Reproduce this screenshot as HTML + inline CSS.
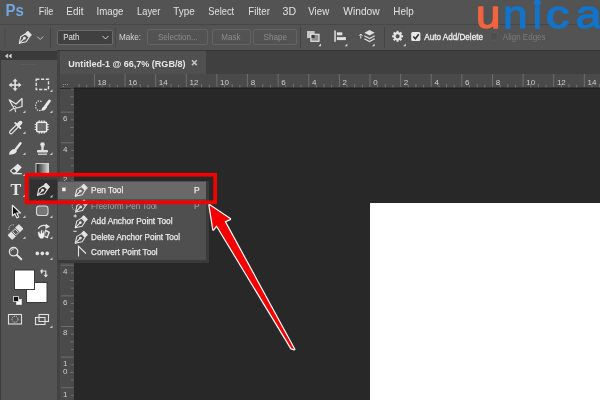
<!DOCTYPE html>
<html><head><meta charset="utf-8"><title>Pen Tool</title>
<style>
html,body{margin:0;padding:0;}
body{width:600px;height:400px;overflow:hidden;background:#282828;position:relative;font-family:"Liberation Sans",sans-serif;color:#dcdcdc;}
.abs{position:absolute;}
svg{will-change:transform;}
#menubar{left:0;top:0;width:600px;height:24px;background:#535353;}
#optbar{left:0;top:23.500px;width:600px;height:26px;background:#535353;border-top:1px solid #474747;box-sizing:border-box;}
#optline{left:0;top:49.500px;width:600px;height:1.500px;background:#363636;}
.btn{position:absolute;top:29px;height:16px;box-sizing:border-box;border:1px solid #636363;border-radius:2px;background:#535353;color:#8e8e8e;font-size:9px;text-align:center;line-height:13px;}
#toolbar{left:0;top:50px;width:57px;height:350px;background:#535353;}
#tbhead{left:0;top:51px;width:57px;height:9px;background:#3a3a3a;}
#tbsep{left:57px;top:51px;width:3px;height:349px;background:#424242;}
#tabbar{left:60px;top:51px;width:540px;height:23px;background:#404040;}
#tab{left:60px;top:51px;width:146px;height:23px;background:#505050;}
#doc{left:369.700px;top:203.200px;width:231px;height:197px;background:#fff;}
#fly{left:57.500px;top:180.500px;width:148.300px;height:79px;background:#4f4f4f;box-shadow:1.500px 1.500px 0 1.500px #3a3a3a;}
#flysel{left:57.500px;top:182px;width:148.300px;height:16.800px;background:#696969;}
svg text.rl{font-family:"Liberation Sans",sans-serif;font-size:8px;fill:#cdcdcd;}
</style></head><body>

<div id="menubar" class="abs"></div>

<div id="optbar" class="abs"></div><div id="optline" class="abs"></div>
<!-- options bar content -->
<div class="abs" style="left:56.500px;top:29.500px;width:56px;height:15px;box-sizing:border-box;border:1px solid #6a6a6a;border-radius:2px;background:#404040;"></div>
<div class="btn" style="left:147px;width:61px;"></div>
<div class="btn" style="left:212px;width:39px;"></div>
<div class="btn" style="left:253px;width:44px;"></div>

<div id="toolbar" class="abs"></div>
<div id="tbhead" class="abs"></div>
<div id="tbsep" class="abs"></div>
<div id="tabbar" class="abs"></div>
<div id="tab" class="abs"></div>
<div id="doc" class="abs"></div>

<!-- rulers -->
<svg class="abs" style="left:0;top:0" width="600" height="400" viewBox="0 0 600 400">
<rect x="0" y="50" width="1" height="350" fill="#3c3c3c"/>
<rect x="60" y="74" width="540" height="14" fill="#4a4a4a"/>
<rect x="60" y="88" width="14" height="312" fill="#4a4a4a"/>
<rect x="60" y="87.500" width="540" height="1.200" fill="#1e1e1e"/>
<rect x="78.61" y="84.1" width="1" height="3.2" fill="#747474"/>
<rect x="86.27" y="84.89999999999999" width="1" height="2.4" fill="#747474"/>
<rect x="93.92" y="74" width="1" height="13" fill="#6e6e6e"/>
<text x="97.62" y="85.2" class="rl">18</text>
<rect x="101.58" y="84.89999999999999" width="1" height="2.4" fill="#747474"/>
<rect x="109.23" y="84.1" width="1" height="3.2" fill="#747474"/>
<rect x="116.89" y="84.89999999999999" width="1" height="2.4" fill="#747474"/>
<rect x="124.54" y="74" width="1" height="13" fill="#6e6e6e"/>
<text x="128.24" y="85.2" class="rl">16</text>
<rect x="132.19" y="84.89999999999999" width="1" height="2.4" fill="#747474"/>
<rect x="139.85" y="84.1" width="1" height="3.2" fill="#747474"/>
<rect x="147.50" y="84.89999999999999" width="1" height="2.4" fill="#747474"/>
<rect x="155.16" y="74" width="1" height="13" fill="#6e6e6e"/>
<text x="158.86" y="85.2" class="rl">14</text>
<rect x="162.81" y="84.89999999999999" width="1" height="2.4" fill="#747474"/>
<rect x="170.47" y="84.1" width="1" height="3.2" fill="#747474"/>
<rect x="178.12" y="84.89999999999999" width="1" height="2.4" fill="#747474"/>
<rect x="185.78" y="74" width="1" height="13" fill="#6e6e6e"/>
<text x="189.48" y="85.2" class="rl">12</text>
<rect x="193.44" y="84.89999999999999" width="1" height="2.4" fill="#747474"/>
<rect x="201.09" y="84.1" width="1" height="3.2" fill="#747474"/>
<rect x="208.75" y="84.89999999999999" width="1" height="2.4" fill="#747474"/>
<rect x="216.40" y="74" width="1" height="13" fill="#6e6e6e"/>
<text x="220.10" y="85.2" class="rl">10</text>
<rect x="224.06" y="84.89999999999999" width="1" height="2.4" fill="#747474"/>
<rect x="231.71" y="84.1" width="1" height="3.2" fill="#747474"/>
<rect x="239.37" y="84.89999999999999" width="1" height="2.4" fill="#747474"/>
<rect x="247.02" y="74" width="1" height="13" fill="#6e6e6e"/>
<text x="250.72" y="85.2" class="rl">8</text>
<rect x="254.67" y="84.89999999999999" width="1" height="2.4" fill="#747474"/>
<rect x="262.33" y="84.1" width="1" height="3.2" fill="#747474"/>
<rect x="269.98" y="84.89999999999999" width="1" height="2.4" fill="#747474"/>
<rect x="277.64" y="74" width="1" height="13" fill="#6e6e6e"/>
<text x="281.34" y="85.2" class="rl">6</text>
<rect x="285.29" y="84.89999999999999" width="1" height="2.4" fill="#747474"/>
<rect x="292.95" y="84.1" width="1" height="3.2" fill="#747474"/>
<rect x="300.60" y="84.89999999999999" width="1" height="2.4" fill="#747474"/>
<rect x="308.26" y="74" width="1" height="13" fill="#6e6e6e"/>
<text x="311.96" y="85.2" class="rl">4</text>
<rect x="315.91" y="84.89999999999999" width="1" height="2.4" fill="#747474"/>
<rect x="323.57" y="84.1" width="1" height="3.2" fill="#747474"/>
<rect x="331.22" y="84.89999999999999" width="1" height="2.4" fill="#747474"/>
<rect x="338.88" y="74" width="1" height="13" fill="#6e6e6e"/>
<text x="342.58" y="85.2" class="rl">2</text>
<rect x="346.53" y="84.89999999999999" width="1" height="2.4" fill="#747474"/>
<rect x="354.19" y="84.1" width="1" height="3.2" fill="#747474"/>
<rect x="361.84" y="84.89999999999999" width="1" height="2.4" fill="#747474"/>
<rect x="369.50" y="74" width="1" height="13" fill="#6e6e6e"/>
<text x="373.20" y="85.2" class="rl">0</text>
<rect x="377.15" y="84.89999999999999" width="1" height="2.4" fill="#747474"/>
<rect x="384.81" y="84.1" width="1" height="3.2" fill="#747474"/>
<rect x="392.46" y="84.89999999999999" width="1" height="2.4" fill="#747474"/>
<rect x="400.12" y="74" width="1" height="13" fill="#6e6e6e"/>
<text x="403.82" y="85.2" class="rl">2</text>
<rect x="407.77" y="84.89999999999999" width="1" height="2.4" fill="#747474"/>
<rect x="415.43" y="84.1" width="1" height="3.2" fill="#747474"/>
<rect x="423.08" y="84.89999999999999" width="1" height="2.4" fill="#747474"/>
<rect x="430.74" y="74" width="1" height="13" fill="#6e6e6e"/>
<text x="434.44" y="85.2" class="rl">4</text>
<rect x="438.39" y="84.89999999999999" width="1" height="2.4" fill="#747474"/>
<rect x="446.05" y="84.1" width="1" height="3.2" fill="#747474"/>
<rect x="453.70" y="84.89999999999999" width="1" height="2.4" fill="#747474"/>
<rect x="461.36" y="74" width="1" height="13" fill="#6e6e6e"/>
<text x="465.06" y="85.2" class="rl">6</text>
<rect x="469.01" y="84.89999999999999" width="1" height="2.4" fill="#747474"/>
<rect x="476.67" y="84.1" width="1" height="3.2" fill="#747474"/>
<rect x="484.32" y="84.89999999999999" width="1" height="2.4" fill="#747474"/>
<rect x="491.98" y="74" width="1" height="13" fill="#6e6e6e"/>
<text x="495.68" y="85.2" class="rl">8</text>
<rect x="499.63" y="84.89999999999999" width="1" height="2.4" fill="#747474"/>
<rect x="507.29" y="84.1" width="1" height="3.2" fill="#747474"/>
<rect x="514.95" y="84.89999999999999" width="1" height="2.4" fill="#747474"/>
<rect x="522.60" y="74" width="1" height="13" fill="#6e6e6e"/>
<text x="526.30" y="85.2" class="rl">10</text>
<rect x="530.25" y="84.89999999999999" width="1" height="2.4" fill="#747474"/>
<rect x="537.91" y="84.1" width="1" height="3.2" fill="#747474"/>
<rect x="545.57" y="84.89999999999999" width="1" height="2.4" fill="#747474"/>
<rect x="553.22" y="74" width="1" height="13" fill="#6e6e6e"/>
<text x="556.92" y="85.2" class="rl">12</text>
<rect x="560.88" y="84.89999999999999" width="1" height="2.4" fill="#747474"/>
<rect x="568.53" y="84.1" width="1" height="3.2" fill="#747474"/>
<rect x="576.19" y="84.89999999999999" width="1" height="2.4" fill="#747474"/>
<rect x="583.84" y="74" width="1" height="13" fill="#6e6e6e"/>
<text x="587.54" y="85.2" class="rl">14</text>
<rect x="591.50" y="84.89999999999999" width="1" height="2.4" fill="#747474"/>
<rect x="599.15" y="84.1" width="1" height="3.2" fill="#747474"/>
<rect x="71.1" y="88.67" width="2.4" height="1" fill="#747474"/>
<rect x="70.3" y="96.33" width="3.2" height="1" fill="#747474"/>
<rect x="71.1" y="103.98" width="2.4" height="1" fill="#747474"/>
<rect x="61" y="111.64" width="12.5" height="1" fill="#6e6e6e"/>
<text x="63" y="120.94" class="rl">6</text>
<rect x="71.1" y="119.30" width="2.4" height="1" fill="#747474"/>
<rect x="70.3" y="126.95" width="3.2" height="1" fill="#747474"/>
<rect x="71.1" y="134.60" width="2.4" height="1" fill="#747474"/>
<rect x="61" y="142.26" width="12.5" height="1" fill="#6e6e6e"/>
<text x="63" y="151.56" class="rl">4</text>
<rect x="71.1" y="149.91" width="2.4" height="1" fill="#747474"/>
<rect x="70.3" y="157.57" width="3.2" height="1" fill="#747474"/>
<rect x="71.1" y="165.22" width="2.4" height="1" fill="#747474"/>
<rect x="61" y="172.88" width="12.5" height="1" fill="#6e6e6e"/>
<text x="63" y="182.18" class="rl">2</text>
<rect x="71.1" y="180.53" width="2.4" height="1" fill="#747474"/>
<rect x="70.3" y="188.19" width="3.2" height="1" fill="#747474"/>
<rect x="71.1" y="195.84" width="2.4" height="1" fill="#747474"/>
<rect x="61" y="203.50" width="12.5" height="1" fill="#6e6e6e"/>
<text x="63" y="212.80" class="rl">0</text>
<rect x="71.1" y="211.16" width="2.4" height="1" fill="#747474"/>
<rect x="70.3" y="218.81" width="3.2" height="1" fill="#747474"/>
<rect x="71.1" y="226.47" width="2.4" height="1" fill="#747474"/>
<rect x="61" y="234.12" width="12.5" height="1" fill="#6e6e6e"/>
<text x="63" y="243.42" class="rl">2</text>
<rect x="71.1" y="241.78" width="2.4" height="1" fill="#747474"/>
<rect x="70.3" y="249.43" width="3.2" height="1" fill="#747474"/>
<rect x="71.1" y="257.08" width="2.4" height="1" fill="#747474"/>
<rect x="61" y="264.74" width="12.5" height="1" fill="#6e6e6e"/>
<text x="63" y="274.04" class="rl">4</text>
<rect x="71.1" y="272.39" width="2.4" height="1" fill="#747474"/>
<rect x="70.3" y="280.05" width="3.2" height="1" fill="#747474"/>
<rect x="71.1" y="287.70" width="2.4" height="1" fill="#747474"/>
<rect x="61" y="295.36" width="12.5" height="1" fill="#6e6e6e"/>
<text x="63" y="304.66" class="rl">6</text>
<rect x="71.1" y="303.01" width="2.4" height="1" fill="#747474"/>
<rect x="70.3" y="310.67" width="3.2" height="1" fill="#747474"/>
<rect x="71.1" y="318.32" width="2.4" height="1" fill="#747474"/>
<rect x="61" y="325.98" width="12.5" height="1" fill="#6e6e6e"/>
<text x="63" y="335.28" class="rl">8</text>
<rect x="71.1" y="333.63" width="2.4" height="1" fill="#747474"/>
<rect x="70.3" y="341.29" width="3.2" height="1" fill="#747474"/>
<rect x="71.1" y="348.94" width="2.4" height="1" fill="#747474"/>
<rect x="61" y="356.60" width="12.5" height="1" fill="#6e6e6e"/>
<text x="63" y="365.90" class="rl">1</text>
<text x="63" y="374.20" class="rl">0</text>
<rect x="71.1" y="364.25" width="2.4" height="1" fill="#747474"/>
<rect x="70.3" y="371.91" width="3.2" height="1" fill="#747474"/>
<rect x="71.1" y="379.56" width="2.4" height="1" fill="#747474"/>
<rect x="61" y="387.22" width="12.5" height="1" fill="#6e6e6e"/>
<text x="63" y="396.52" class="rl">1</text>
<text x="63" y="404.82" class="rl">2</text>
<rect x="71.1" y="394.88" width="2.4" height="1" fill="#747474"/>
<rect x="61" y="417.84" width="12.5" height="1" fill="#6e6e6e"/>
<text x="63" y="427.14" class="rl">1</text>
<text x="63" y="435.44" class="rl">4</text>
<rect x="60" y="74" width="14" height="14" fill="#4a4a4a"/>
<g fill="#8a8a8a"><rect x="63" y="84" width="1" height="1"/><rect x="65" y="84" width="1" height="1"/><rect x="67" y="84" width="1" height="1"/><rect x="63" y="86" width="1" height="1"/></g>
</svg>

<div id="fly" class="abs"></div>
<div id="flysel" class="abs"></div>

<!-- icons overlay -->
<svg class="abs" style="left:0;top:0" width="600" height="400" viewBox="0 0 600 400">
<g font-family="'Liberation Sans',sans-serif">
<text x="38.85" y="15.00" textLength="14.55" lengthAdjust="spacingAndGlyphs" font-size="10.6" fill="#e2e2e2" font-weight="normal" >File</text>
<text x="66.35" y="15.00" textLength="17.05" lengthAdjust="spacingAndGlyphs" font-size="10.6" fill="#e2e2e2" font-weight="normal" >Edit</text>
<text x="96.60" y="15.00" textLength="26.80" lengthAdjust="spacingAndGlyphs" font-size="10.6" fill="#e2e2e2" font-weight="normal" >Image</text>
<text x="137.10" y="15.00" textLength="23.30" lengthAdjust="spacingAndGlyphs" font-size="10.6" fill="#e2e2e2" font-weight="normal" >Layer</text>
<text x="173.35" y="15.00" textLength="21.30" lengthAdjust="spacingAndGlyphs" font-size="10.6" fill="#e2e2e2" font-weight="normal" >Type</text>
<text x="208.35" y="15.00" textLength="25.80" lengthAdjust="spacingAndGlyphs" font-size="10.6" fill="#e2e2e2" font-weight="normal" >Select</text>
<text x="248.35" y="15.00" textLength="21.55" lengthAdjust="spacingAndGlyphs" font-size="10.6" fill="#e2e2e2" font-weight="normal" >Filter</text>
<text x="282.60" y="15.00" textLength="13.55" lengthAdjust="spacingAndGlyphs" font-size="10.6" fill="#e2e2e2" font-weight="normal" >3D</text>
<text x="308.35" y="15.00" textLength="20.80" lengthAdjust="spacingAndGlyphs" font-size="10.6" fill="#e2e2e2" font-weight="normal" >View</text>
<text x="343.35" y="15.00" textLength="36.30" lengthAdjust="spacingAndGlyphs" font-size="10.6" fill="#e2e2e2" font-weight="normal" >Window</text>
<text x="393.35" y="15.00" textLength="20.30" lengthAdjust="spacingAndGlyphs" font-size="10.6" fill="#e2e2e2" font-weight="normal" >Help</text>
<text x="5.60" y="15.80" textLength="18.30" lengthAdjust="spacingAndGlyphs" font-size="16.8" fill="#72a6de" font-weight="bold" >Ps</text>
<text x="63.20" y="40.20" textLength="16.20" lengthAdjust="spacingAndGlyphs" font-size="9" fill="#e6e6e6" font-weight="normal" >Path</text>
<text x="118.90" y="40.20" textLength="22.20" lengthAdjust="spacingAndGlyphs" font-size="9" fill="#d4d4d4" font-weight="normal" >Make:</text>
<text x="157.90" y="40.20" textLength="39.80" lengthAdjust="spacingAndGlyphs" font-size="9" fill="#8c8c8c" font-weight="normal" >Selection...</text>
<text x="221.30" y="40.20" textLength="19.10" lengthAdjust="spacingAndGlyphs" font-size="9" fill="#8c8c8c" font-weight="normal" >Mask</text>
<text x="263.60" y="40.20" textLength="23.50" lengthAdjust="spacingAndGlyphs" font-size="9" fill="#8c8c8c" font-weight="normal" >Shape</text>
<text x="424.35" y="40.20" textLength="58.60" lengthAdjust="spacingAndGlyphs" font-size="9" fill="#f0f0f0" font-weight="normal" stroke="#f0f0f0" stroke-width="0.3">Auto Add/Delete</text>
<text x="502.80" y="40.20" textLength="42.80" lengthAdjust="spacingAndGlyphs" font-size="9" fill="#7c7c7c" font-weight="normal" >Align Edges</text>
<text x="68.35" y="66.80" textLength="117.10" lengthAdjust="spacingAndGlyphs" font-size="9.8" fill="#e6e6e6" font-weight="bold" >Untitled-1 @ 66,7% (RGB/8)</text>
<text x="91.10" y="193.20" textLength="32.20" lengthAdjust="spacingAndGlyphs" font-size="9" fill="#ececec" font-weight="normal" stroke="#ececec" stroke-width="0.25">Pen Tool</text>
<text x="194.00" y="193.20" textLength="5.60" lengthAdjust="spacingAndGlyphs" font-size="9" fill="#ececec" font-weight="normal" stroke="#ececec" stroke-width="0.25">P</text>
<text x="91.10" y="208.70" textLength="65.80" lengthAdjust="spacingAndGlyphs" font-size="9" fill="#a8a8a8" font-weight="normal" >Freeform Pen Tool</text>
<text x="194.00" y="208.70" textLength="5.60" lengthAdjust="spacingAndGlyphs" font-size="9" fill="#a8a8a8" font-weight="normal" >P</text>
<text x="91.10" y="224.20" textLength="81.40" lengthAdjust="spacingAndGlyphs" font-size="9" fill="#ececec" font-weight="normal" stroke="#ececec" stroke-width="0.25">Add Anchor Point Tool</text>
<text x="91.10" y="239.75" textLength="89.00" lengthAdjust="spacingAndGlyphs" font-size="9" fill="#ececec" font-weight="normal" stroke="#ececec" stroke-width="0.25">Delete Anchor Point Tool</text>
<text x="91.10" y="255.20" textLength="66.50" lengthAdjust="spacingAndGlyphs" font-size="9" fill="#ececec" font-weight="normal" stroke="#ececec" stroke-width="0.25">Convert Point Tool</text>
</g>
<!-- toolbar collapse chevrons -->
<path d="M7.800 54 L5.300 56 L7.800 58 Z M11.300 54 L8.800 56 L11.300 58 Z" fill="#d8d8d8" stroke="#d8d8d8" stroke-width="0.500"/>
<!-- tab close -->
<path d="M192 60.300 L196.800 65.100 M196.800 60.300 L192 65.100" stroke="#c0c0c0" stroke-width="1.600" fill="none"/>

<!-- option bar icons -->
<g transform="translate(18.3,30.8) scale(0.95)"><g fill="none" stroke="#e4e4e4" stroke-width="1.15" stroke-linejoin="round" stroke-linecap="round">
<path d="M1 13.2 L2.6 6.2 L7.6 3.1 L11.4 6.9 L8.3 11.6 Z"/>
<path d="M1.2 13 L5.8 8.4"/>
<circle cx="6.4" cy="7.8" r="0.9" fill="#e4e4e4"/>
<path d="M8.2 2.4 L10 0.7 L13.6 4.3 L11.9 6.1 Z" fill="#e4e4e4"/>
</g></g>
<path d="M37.200 36.500 L40.200 39.500 L43.200 36.500" fill="none" stroke="#c0c0c0" stroke-width="1"/>
<rect x="50" y="27" width="1" height="21" fill="#444"/>
<rect x="115" y="27" width="1" height="21" fill="#484848"/>
<rect x="4.500" y="28" width="1" height="19" fill="#4a4a4a"/>
<path d="M102.500 36 L105.500 39 L108.500 36" fill="none" stroke="#d0d0d0" stroke-width="1"/>
<rect x="300" y="27" width="1" height="21" fill="#444"/>
<!-- path ops -->
<rect x="307" y="31" width="7.600" height="7" fill="#c4c4c4"/>
<rect x="310.900" y="34.300" width="8.100" height="7" fill="#8e8e8e" stroke="#ececec" stroke-width="1.100"/>
<rect x="311.500" y="34.900" width="3.100" height="3.100" fill="#3c3c3c"/>
<path d="M321 43.6 L321 46.2 L318.4 46.2 Z" fill="#d8d8d8"/>
<!-- align -->
<rect x="334.300" y="30.500" width="1.500" height="11.300" fill="#e0e0e0"/>
<rect x="336.900" y="32.300" width="5.400" height="3" fill="#e0e0e0"/>
<rect x="336.900" y="37.100" width="9" height="3" fill="#e0e0e0"/>
<path d="M347.3 43.6 L347.3 46.2 L344.7 46.2 Z" fill="#d8d8d8"/>
<!-- arrange -->
<path d="M364.300 32.800 L369.500 30 L374.700 32.800 L369.500 35.600 Z" fill="#e0e0e0"/>
<path d="M364.300 35.800 L369.500 38.600 L374.700 35.800 M364.300 38.800 L369.500 41.600 L374.700 38.800" fill="none" stroke="#e0e0e0" stroke-width="1.200"/>
<path d="M360.800 38.500 L360.800 34 M359.200 35.700 L360.800 34 L362.400 35.700" fill="none" stroke="#e0e0e0" stroke-width="1"/>
<path d="M374.6 43.6 L374.6 46.2 L372.0 46.2 Z" fill="#d8d8d8"/>
<rect x="384" y="27" width="1" height="21" fill="#444"/>
<!-- gear -->
<g transform="translate(397.600,36.300) scale(0.880)">
<circle r="3.600" fill="none" stroke="#e6e6e6" stroke-width="2.400"/>
<g stroke="#e6e6e6" stroke-width="2.300">
<path d="M0 -6.200 L0 -4"/><path d="M0 6.200 L0 4"/><path d="M-6.200 0 L-4 0"/><path d="M6.200 0 L4 0"/>
<path d="M-4.400 -4.400 L-2.900 -2.900"/><path d="M4.400 4.400 L2.900 2.900"/><path d="M-4.400 4.400 L-2.900 2.900"/><path d="M4.400 -4.400 L2.900 -2.900"/>
</g></g>
<path d="M405.8 43.6 L405.8 46.2 L403.2 46.2 Z" fill="#d8d8d8"/>
<!-- checkbox checked -->
<rect x="411.200" y="32" width="9.200" height="9" rx="1.500" fill="#e8e8e8"/>
<path d="M413.300 36.600 L415.400 38.800 L418.700 34.200" fill="none" stroke="#2c2c2c" stroke-width="1.500"/>
<!-- checkbox disabled -->
<rect x="490.300" y="32.700" width="7.500" height="7.500" rx="1" fill="#4f4f4f" stroke="#5c5c5c" stroke-width="0.800"/>

<!-- ===== toolbar icons ===== -->
<path d="M21 64.500 L37 64.500" stroke="#626262" stroke-width="1" stroke-dasharray="1 1"/>
<!-- move -->
<g fill="#e0e0e0"><rect x="14.300" y="80" width="1.600" height="10"/><rect x="10" y="84.200" width="10" height="1.600"/>
<path d="M15.100 78.500 L17.600 81.500 L12.600 81.500 Z"/><path d="M15.100 91.300 L17.600 88.300 L12.600 88.300 Z"/>
<path d="M8.700 85 L11.700 82.500 L11.700 87.500 Z"/><path d="M21.500 85 L18.500 82.500 L18.500 87.500 Z"/></g>
<!-- marquee -->
<rect x="36.200" y="79.200" width="12.300" height="10.300" fill="none" stroke="#e0e0e0" stroke-width="1.400" stroke-dasharray="3.200 1.600"/>
<path d="M52.5 89.3 L52.5 92 L49.8 92 Z" fill="#c8c8c8"/>
<!-- polygonal lasso -->
<path d="M9.200 99.800 L16 104 L22 98.600 L22 106.500 L16.800 108 L12.600 106 Z" fill="none" stroke="#e4e4e4" stroke-width="1.300" stroke-linejoin="round"/>
<circle cx="14.600" cy="107.400" r="1.200" fill="#535353" stroke="#e4e4e4" stroke-width="0.900"/>
<path d="M13.800 108.200 L9.800 110.900 M14.800 108.600 L15.600 111.600" fill="none" stroke="#e4e4e4" stroke-width="1.100" stroke-linecap="round"/>
<path d="M25.5 110.3 L25.5 113 L22.8 113 Z" fill="#c8c8c8"/>
<!-- quick select -->
<path d="M41.500 101.600 Q38.500 99.800 36.600 102.300 Q34.800 105.500 36.300 108.800 Q38.300 111.800 41 109.900" fill="none" stroke="#e4e4e4" stroke-width="1.100" stroke-dasharray="1.500 1.100"/>
<path d="M49.400 101 L45.800 105.800" stroke="#e8e8e8" stroke-width="2.900" stroke-linecap="round"/>
<path d="M44.800 105.400 L47.100 107.200 L45 110 L41.200 111 L42.200 107.800 Z" fill="#e8e8e8"/>
<path d="M52.5 110.3 L52.5 113 L49.8 113 Z" fill="#c8c8c8"/>
<!-- eyedropper -->
<path d="M16.600 124.600 L10.200 131 Q9 132.300 10 133.300 Q11 134.300 12.300 133.100 L18.700 126.700" fill="none" stroke="#e6e6e6" stroke-width="1.200" stroke-linejoin="round"/>
<path d="M15.200 122.900 L20.400 128.100" stroke="#e6e6e6" stroke-width="1.800" stroke-linecap="round"/>
<path d="M18.300 124.900 L20.500 122.700" stroke="#e6e6e6" stroke-width="3.800" stroke-linecap="round"/>
<path d="M25.5 131.3 L25.5 134 L22.8 134 Z" fill="#c8c8c8"/>
<!-- patch -->
<rect x="36.700" y="122.300" width="10" height="9.400" rx="1.200" fill="#6c6c6c" stroke="#ececec" stroke-width="1.500"/>
<g stroke="#ececec" stroke-width="1"><path d="M34.700 124.500 L36.700 124.500 M34.700 127 L36.700 127 M34.700 129.500 L36.700 129.500 M46.700 124.500 L48.700 124.500 M46.700 127 L48.700 127 M46.700 129.500 L48.700 129.500 M39.200 120.300 L39.200 122.300 M41.700 120.300 L41.700 122.300 M44.200 120.300 L44.200 122.300 M39.200 131.700 L39.200 133.700 M41.700 131.700 L41.700 133.700 M44.200 131.700 L44.200 133.700"/></g>
<!-- brush -->
<path d="M20.500 143.200 L16 149" stroke="#e8e8e8" stroke-width="2.400" stroke-linecap="round"/>
<path d="M14.900 149 L16.900 150.800 Q16.300 153.600 12.800 154.200 L9 154.700 Q9.500 151.200 12.200 149.600 Z" fill="#e8e8e8"/>
<path d="M25.5 152.3 L25.5 155 L22.8 155 Z" fill="#c8c8c8"/>
<!-- stamp -->
<circle cx="42.500" cy="144.500" r="2.300" fill="#e0e0e0"/>
<rect x="41.300" y="145.500" width="2.400" height="5" fill="#e0e0e0"/>
<rect x="37" y="150" width="11" height="2.600" rx="0.800" fill="#e0e0e0"/>
<rect x="38" y="153.600" width="9" height="1.200" fill="#e0e0e0"/>
<path d="M52.5 152.3 L52.5 155 L49.8 155 Z" fill="#c8c8c8"/>
<!-- eraser -->
<path d="M9.700 170.800 L17.800 163.800 L21.800 167.300 L16.200 173.400 L12.300 173.400 Z" fill="#e6e6e6"/>
<path d="M11.300 170.800 L13.700 168.800 L16.300 171.200 L14.900 172.500 L12.800 172.500 Z" fill="#4a4a4a"/>
<rect x="12.800" y="173" width="9" height="1.300" fill="#e6e6e6"/>
<path d="M25.5 173.3 L25.5 176 L22.8 176 Z" fill="#c8c8c8"/>
<!-- gradient -->
<defs><linearGradient id="gr" x1="0" y1="0" x2="1" y2="0"><stop offset="0" stop-color="#1c1c1c"/><stop offset="1" stop-color="#d8d8d8"/></linearGradient></defs>
<rect x="36" y="163.500" width="12.500" height="11" fill="url(#gr)" stroke="#d0d0d0" stroke-width="1"/>
<!-- Type T -->
<text x="10.600" y="195" style="font-family:'Liberation Serif',serif;font-size:16.200px;font-weight:bold;fill:#e6e6e6;">T</text>
<path d="M25.5 194.3 L25.5 197 L22.8 197 Z" fill="#c8c8c8"/>
<!-- selected pen tool button -->
<rect x="28.500" y="176" width="28.500" height="25" fill="#3e3e3e"/><rect x="29.500" y="179.500" width="27.500" height="21" fill="#303030"/>
<g transform="translate(36.5,182.8) scale(0.95)"><g fill="none" stroke="#e4e4e4" stroke-width="1.15" stroke-linejoin="round" stroke-linecap="round">
<path d="M1 13.2 L2.6 6.2 L7.6 3.1 L11.4 6.9 L8.3 11.6 Z"/>
<path d="M1.2 13 L5.8 8.4"/>
<circle cx="6.4" cy="7.8" r="0.9" fill="#e4e4e4"/>
<path d="M8.2 2.4 L10 0.7 L13.6 4.3 L11.9 6.1 Z" fill="#e4e4e4"/>
</g></g>
<path d="M52.5 194.8 L52.5 197.5 L49.8 197.5 Z" fill="#c8c8c8"/>
<!-- path selection arrow -->
<path d="M12.400 205.300 L12.400 215.800 L14.900 213.700 L16.900 217.900 L18.700 217 L16.800 213 L20.500 213 Z" fill="#111" stroke="#e4e4e4" stroke-width="1.200" stroke-linejoin="round"/>
<path d="M25.5 215.3 L25.5 218 L22.8 218 Z" fill="#c8c8c8"/>
<!-- rounded rect -->
<rect x="36.500" y="206" width="11.500" height="9.500" rx="2.800" fill="#767676" stroke="#d8d8d8" stroke-width="1.100"/>
<path d="M52.5 215.3 L52.5 218 L49.8 218 Z" fill="#c8c8c8"/>
<!-- healing brush -->
<g transform="translate(15.500,232) rotate(-45)"><rect x="-8" y="-3.300" width="16" height="6.600" rx="1" fill="#e0e0e0"/><rect x="-2.800" y="-3.300" width="5.600" height="6.600" fill="#535353"/><rect x="-1.800" y="-2.200" width="3.600" height="4.400" fill="none" stroke="#e0e0e0" stroke-width="0.900"/></g>
<path d="M9 230 A4 4 0 0 1 15 225.500" fill="none" stroke="#d0d0d0" stroke-width="1" stroke-dasharray="1.200 1.200"/>
<path d="M25.5 236.3 L25.5 239 L22.8 239 Z" fill="#c8c8c8"/>
<!-- rotate view / hand -->
<path d="M38.300 228.800 A6.200 6.200 0 0 1 47 226.300" fill="none" stroke="#e4e4e4" stroke-width="1.400"/>
<path d="M45.800 223.800 L50 226.800 L45.300 228.900 Z" fill="#e4e4e4"/>
<path d="M45.300 229.300 L50 232 L47.600 238.600 L43.500 236.600 Z" fill="#e8e8e8"/>
<path d="M46 231.500 L48.300 232.800 L46.800 236.600 L44.800 235.600 Z" fill="#5a5a5a"/>
<path d="M37.600 232.200 L39.300 231.300 L40.400 233.700 L40.900 229.800 L42.300 229.800 L42.600 233.200 L43.600 230.500 L44.800 231 L44.400 236 L43.200 238.800 L40.200 238.800 L38.300 236 Z" fill="#f2f2f2" stroke="#535353" stroke-width="0.500"/>
<path d="M52.5 236.3 L52.5 239 L49.8 239 Z" fill="#c8c8c8"/>
<!-- zoom -->
<circle cx="13.600" cy="251.700" r="4.200" fill="none" stroke="#e4e4e4" stroke-width="1.300"/>
<path d="M16.900 255 L21.300 259.300" stroke="#e4e4e4" stroke-width="1.900" stroke-linecap="round"/>
<path d="M11.100 251.200 A2.600 2.600 0 0 1 14.100 249" fill="none" stroke="#e4e4e4" stroke-width="0.800"/>
<!-- dots -->
<circle cx="37.300" cy="253.400" r="1.800" fill="#e4e4e4"/><circle cx="42.300" cy="253.400" r="1.800" fill="#e4e4e4"/><circle cx="47.200" cy="253.400" r="1.800" fill="#e4e4e4"/>
<path d="M52.5 257.3 L52.5 260 L49.8 260 Z" fill="#c8c8c8"/>
<!-- colour swatches -->
<rect x="26.500" y="282.500" width="20.500" height="20" fill="#fff" stroke="#3a3a3a" stroke-width="1"/>
<rect x="14.500" y="270" width="20" height="19.500" fill="#fff" stroke="#3a3a3a" stroke-width="1"/>
<path d="M41.500 273.500 L41.500 271 L45.800 271 L45.800 275.500" fill="none" stroke="#e0e0e0" stroke-width="1.200"/>
<path d="M40 271 L42.500 268.800 L42.500 273.200 Z" fill="#e0e0e0"/><path d="M45.800 277.500 L43.500 274.800 L48.100 274.800 Z" fill="#e0e0e0"/>
<rect x="16.500" y="299.500" width="5" height="5" fill="#fff" stroke="#e0e0e0" stroke-width="0.800"/>
<rect x="13.500" y="296.500" width="5" height="5" fill="#111" stroke="#e0e0e0" stroke-width="0.800"/>
<!-- quick mask -->
<rect x="8.500" y="314.500" width="13" height="9.500" fill="none" stroke="#e0e0e0" stroke-width="1.100"/>
<circle cx="15" cy="319.200" r="3" fill="none" stroke="#e0e0e0" stroke-width="0.900" stroke-dasharray="1.200 0.900"/>
<!-- screen mode -->
<rect x="39" y="314.500" width="9.500" height="7" fill="#535353" stroke="#e0e0e0" stroke-width="1.100"/>
<rect x="35.500" y="317.500" width="9.500" height="7" fill="#535353" stroke="#e0e0e0" stroke-width="1.100"/>
<path d="M39 317.500 L39 321.500 L45 321.500" fill="none" stroke="#e0e0e0" stroke-width="1.100"/>
<path d="M52.5 325.3 L52.5 328 L49.8 328 Z" fill="#c8c8c8"/>

<!-- ===== flyout menu icons ===== -->
<rect x="62.200" y="187.600" width="3.400" height="3.600" fill="#f0f0f0"/>
<g transform="translate(74.3,183.7) scale(0.95)"><g fill="none" stroke="#e4e4e4" stroke-width="1.15" stroke-linejoin="round" stroke-linecap="round">
<path d="M1 13.2 L2.6 6.2 L7.6 3.1 L11.4 6.9 L8.3 11.6 Z"/>
<path d="M1.2 13 L5.8 8.4"/>
<circle cx="6.4" cy="7.8" r="0.9" fill="#e4e4e4"/>
<path d="M8.2 2.4 L10 0.7 L13.6 4.3 L11.9 6.1 Z" fill="#e4e4e4"/>
</g></g>
<g transform="translate(74.6,199.5) scale(0.95)"><g fill="none" stroke="#e4e4e4" stroke-width="1.15" stroke-linejoin="round" stroke-linecap="round">
<path d="M1 13.2 L2.6 6.2 L7.6 3.1 L11.4 6.9 L8.3 11.6 Z"/>
<path d="M1.2 13 L5.8 8.4"/>
<circle cx="6.4" cy="7.8" r="0.9" fill="#e4e4e4"/>
<path d="M8.2 2.4 L10 0.7 L13.6 4.3 L11.9 6.1 Z" fill="#e4e4e4"/>
</g></g>
<path d="M74.500 200.500 Q71 204 72.800 208.500 Q74 211 76.500 211.300" fill="none" stroke="#c8c8c8" stroke-width="0.900" stroke-dasharray="1.300 1.100"/>
<g transform="translate(74.3,215.2) scale(0.95)"><g fill="none" stroke="#e4e4e4" stroke-width="1.15" stroke-linejoin="round" stroke-linecap="round">
<path d="M1 13.2 L2.6 6.2 L7.6 3.1 L11.4 6.9 L8.3 11.6 Z"/>
<path d="M1.2 13 L5.8 8.4"/>
<circle cx="6.4" cy="7.8" r="0.9" fill="#e4e4e4"/>
<path d="M8.2 2.4 L10 0.7 L13.6 4.3 L11.9 6.1 Z" fill="#e4e4e4"/>
</g></g>
<path d="M73.600 216 L76.800 216 M75.200 214.400 L75.200 217.600" stroke="#e4e4e4" stroke-width="1"/>
<g transform="translate(74.3,230.7) scale(0.95)"><g fill="none" stroke="#e4e4e4" stroke-width="1.15" stroke-linejoin="round" stroke-linecap="round">
<path d="M1 13.2 L2.6 6.2 L7.6 3.1 L11.4 6.9 L8.3 11.6 Z"/>
<path d="M1.2 13 L5.8 8.4"/>
<circle cx="6.4" cy="7.8" r="0.9" fill="#e4e4e4"/>
<path d="M8.2 2.4 L10 0.7 L13.6 4.3 L11.9 6.1 Z" fill="#e4e4e4"/>
</g></g>
<path d="M73.300 231.300 L76.600 231.300" stroke="#e4e4e4" stroke-width="1"/>
<path d="M78.500 256.500 L78.500 246.300 L86 253.500" fill="none" stroke="#e4e4e4" stroke-width="1.100" stroke-linejoin="miter"/>

<!-- ===== red annotation ===== -->
<rect x="26.600" y="174.700" width="188.550" height="27.700" fill="none" stroke="#f40000" stroke-width="3.700"/>
<!-- arrow -->
<path d="M209.500 205.300 L230 219.100 L224.600 221.400 L294.200 349.300 L291.300 348.300 L216.600 225.200 L213.300 229.600 Z" fill="#f50000" stroke="#ffffff" stroke-width="2.400" stroke-linejoin="round"/>
<path d="M209.500 205.300 L230 219.100 L224.600 221.400 L294.200 349.300 L291.300 348.300 L216.600 225.200 L213.300 229.600 Z" fill="#f50000"/>

<!-- ===== unica logo (real text) ===== -->
<g style="font-family:'Liberation Sans',sans-serif;font-weight:normal;font-size:39.500px;" stroke-linejoin="round" stroke-width="1.300">
<text x="476" y="28.200" fill="#f0643f" stroke="#f0643f" textLength="24.400" lengthAdjust="spacingAndGlyphs">u</text>
<text x="503" y="28.200" fill="#1374c9" stroke="#1374c9" textLength="24.400" lengthAdjust="spacingAndGlyphs">n</text>
<text x="533" y="28.200" fill="#1374c9" stroke="#1374c9">i</text>
<text x="546" y="28.200" fill="#1374c9" stroke="#1374c9" textLength="23.500" lengthAdjust="spacingAndGlyphs">c</text>
<text x="575.500" y="28.200" fill="#1374c9" stroke="#1374c9" textLength="26" lengthAdjust="spacingAndGlyphs">a</text>
<circle cx="537.400" cy="2.700" r="3.400" fill="#1374c9" stroke="none"/>
</g>
</svg>
</body></html>
